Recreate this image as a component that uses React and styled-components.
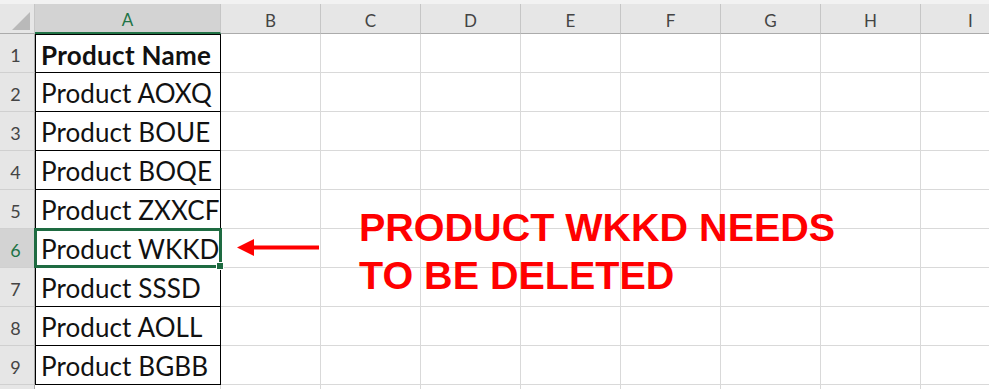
import styled, { createGlobalStyle } from "styled-components";

const columns = ["A", "B", "C", "D", "E", "F", "G", "H", "I"];
const products = [
  "Product Name",
  "Product AOXQ",
  "Product BOUE",
  "Product BOQE",
  "Product ZXXCF",
  "Product WKKD",
  "Product SSSD",
  "Product AOLL",
  "Product BGBB",
];
const selectedRow = 6;

const App = () => {
  return (
    <Sheet>
      <GlobalStyle />
      <TopStrip />
      <Grid>
        <Corner>
          <svg width="18" height="18" viewBox="0 0 18 18">
            <polygon points="18,0 18,18 0,18" fill="#b9b9b9" />
          </svg>
        </Corner>
        {columns.map((c) => (
          <ColHeader key={c} $active={c === "A"}>
            {c}
          </ColHeader>
        ))}
        {products.map((name, i) => {
          const row = i + 1;
          return [
            <RowHeader key={`h${row}`} $active={row === selectedRow}>
              {row}
            </RowHeader>,
            <DataCell
              key={`a${row}`}
              $first={row === 1}
              $bold={row === 1}
              $selected={row === selectedRow}
            >
              {name}
              {row === selectedRow && <FillHandle />}
            </DataCell>,
            ...columns.slice(1).map((c) => <Cell key={`${c}${row}`} />),
          ];
        })}
        {/* row 10 is only a sliver at the bottom edge */}
        <RowHeader />
        {columns.map((c) => (
          <Cell key={`${c}10`} />
        ))}
      </Grid>

      <Arrow width="82" height="18" viewBox="0 0 82 18">
        <rect x="14" y="6.5" width="68" height="4" fill="#ff0000" />
        <polygon points="0,8.5 17,0 17,17" fill="#ff0000" />
      </Arrow>

      <Note>
        PRODUCT WKKD NEEDS
        <br />
        TO BE DELETED
      </Note>
    </Sheet>
  );
};

export default App;

const GlobalStyle = createGlobalStyle`
  body {
    margin: 0;
    background: #ffffff;
    font-family: Lato, "Open Sans", sans-serif;
  }
`;

const Sheet = styled.div`
  position: relative;
  width: 989px;
  height: 389px;
  overflow: hidden;
  background: #ffffff;
`;

const TopStrip = styled.div`
  height: 4px;
  background: #f2f2f2;
`;

const Grid = styled.div`
  display: grid;
  grid-template-columns: 35px 186px repeat(8, 100px);
  grid-template-rows: 30px repeat(10, 39px);
`;

const Corner = styled.div`
  box-sizing: border-box;
  display: flex;
  align-items: flex-end;
  justify-content: flex-end;
  padding: 0 4px 3px 0;
  background: #e6e6e6;
  border-right: 1px solid #c6c6c6;
  border-bottom: 1px solid #ababab;
`;

const ColHeader = styled.div`
  box-sizing: border-box;
  display: flex;
  align-items: center;
  justify-content: center;
  padding-top: 3px;
  font-size: 17px;
  color: ${(p) => (p.$active ? "#217346" : "#444444")};
  background: ${(p) => (p.$active ? "#d3d3d3" : "#e6e6e6")};
  border-right: 1px solid #c6c6c6;
  border-bottom: ${(p) => (p.$active ? "2px solid #217346" : "1px solid #ababab")};
`;

const RowHeader = styled.div`
  box-sizing: border-box;
  display: flex;
  align-items: flex-end;
  justify-content: center;
  padding: 0 3px 6px 0;
  font-size: 18px;
  color: ${(p) => (p.$active ? "#217346" : "#444444")};
  background: ${(p) => (p.$active ? "#d3d3d3" : "#e6e6e6")};
  border-right: 1px solid #ababab;
  border-bottom: 1px solid #d0d0d0;
`;

const Cell = styled.div`
  box-sizing: border-box;
  border-right: 1px solid #d9d9d9;
  border-bottom: 1px solid #d9d9d9;
`;

const DataCell = styled.div`
  position: relative;
  box-sizing: border-box;
  padding: 2px 0 0 5px;
  font-size: 26px;
  line-height: 36px;
  font-weight: ${(p) => (p.$bold ? 700 : 400)};
  letter-spacing: ${(p) => (p.$bold ? "0.3px" : "0.1px")};
  color: #111111;
  white-space: nowrap;
  border: 1px solid #000000;
  border-top: ${(p) => (p.$first ? "1px solid #000000" : "none")};
  ${(p) =>
    p.$selected &&
    `
    z-index: 1;
    border: 3px solid #1e6b41;
    margin: -1px -1px 0 -1px;
    padding: 0 0 0 4px;
  `}
`;

const FillHandle = styled.span`
  position: absolute;
  right: -5px;
  bottom: -5px;
  width: 8px;
  height: 8px;
  box-sizing: border-box;
  background: #1e6b41;
  border: 1px solid #ffffff;
`;

const Arrow = styled.svg`
  position: absolute;
  left: 237px;
  top: 239px;
`;

const Note = styled.div`
  position: absolute;
  left: 359px;
  top: 203px;
  font-family: "Liberation Sans", Arial, sans-serif;
  font-weight: 700;
  font-size: 39.5px;
  line-height: 48px;
  color: #ff0000;
  white-space: nowrap;
`;
